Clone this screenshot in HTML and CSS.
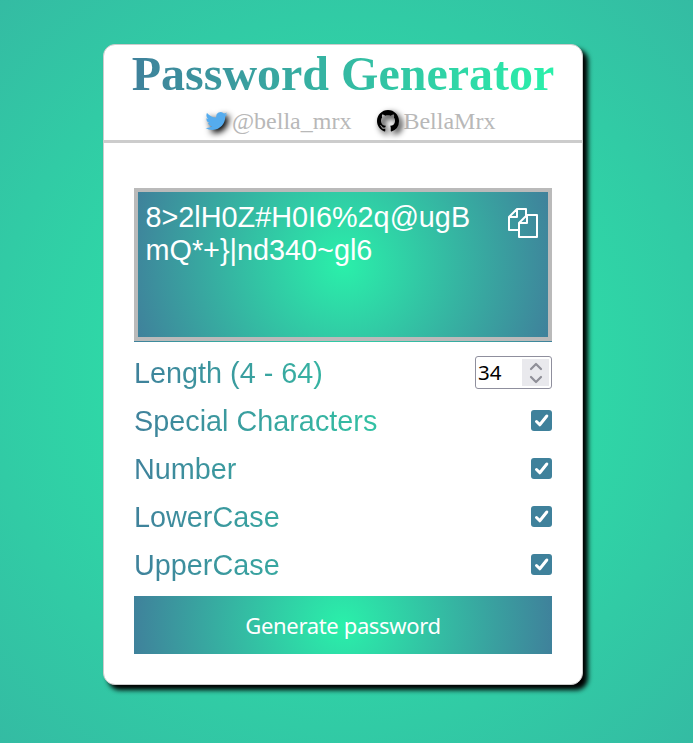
FILE: index.html
```html
<!DOCTYPE html>
<html lang="en">
<head>
<meta charset="utf-8">
<title>Password Generator</title>
<link rel="stylesheet" href="styles.css">
</head>
<body>
<main class="card">
  <header class="header">
    <h1 class="title"><span class="title-text">Password Generator</span></h1>
    <nav class="links">
      <a class="link"><svg class="icon twitter" viewBox="0 0 24 24"><path fill="#55acee" d="M23.953 4.57a10 10 0 01-2.825.775 4.958 4.958 0 002.163-2.723c-.951.555-2.005.959-3.127 1.184a4.92 4.92 0 00-8.384 4.482C7.69 8.095 4.067 6.13 1.64 3.162a4.822 4.822 0 00-.666 2.475c0 1.71.87 3.213 2.188 4.096a4.904 4.904 0 01-2.228-.616v.06a4.923 4.923 0 003.946 4.827 4.996 4.996 0 01-2.212.085 4.936 4.936 0 004.604 3.417 9.867 9.867 0 01-6.102 2.105c-.39 0-.779-.023-1.17-.067a13.995 13.995 0 007.557 2.209c9.053 0 13.998-7.496 13.998-13.985 0-.21 0-.42-.015-.63A9.935 9.935 0 0024 4.59z"/></svg><span class="twitter-name">@bella_mrx</span></a>
      <a class="link"><svg class="icon github" viewBox="0 0 16 16"><path d="M8 0C3.58 0 0 3.58 0 8c0 3.54 2.29 6.53 5.47 7.59.4.07.55-.17.55-.38 0-.19-.01-.82-.01-1.49-2.01.37-2.53-.49-2.69-.94-.09-.23-.48-.94-.82-1.13-.28-.15-.68-.52-.01-.53.63-.01 1.08.58 1.23.82.72 1.21 1.87.87 2.33.66.07-.52.28-.87.51-1.07-1.78-.2-3.64-.89-3.64-3.95 0-.87.31-1.59.82-2.15-.08-.2-.36-1.02.08-2.12 0 0 .67-.21 2.2.82.64-.18 1.32-.27 2-.27s1.36.09 2 .27c1.53-1.04 2.2-.82 2.2-.82.44 1.1.16 1.92.08 2.12.51.56.82 1.27.82 2.15 0 3.07-1.87 3.75-3.65 3.95.29.25.54.73.54 1.48 0 1.07-.01 1.93-.01 2.2 0 .21.15.46.55.38A8.01 8.01 0 0016 8c0-4.42-3.58-8-8-8z"/></svg><span class="github-name">BellaMrx</span></a>
    </nav>
  </header>
  <section class="content">
    <div class="result">
      <div class="password"><span>8&gt;2lH0Z#H0I6%2q@ugB<br>mQ*+}|nd340~gl6</span>
        <svg class="copy" viewBox="0 0 30 30" fill="none" stroke="#fff" stroke-width="2" stroke-linejoin="round"><path d="M11 22H1V9l8-8h9v7M1 9h8V1M19 7h10v22H11V15l8-8v8h-8"/></svg>
      </div>
    </div>
    <div class="options">
      <div class="row"><span class="label">Length (4 - 64)</span><div class="number"><span>34</span><span class="spin"><svg viewBox="0 0 27 27" fill="none" stroke="#8f8f98" stroke-width="2.2" stroke-linecap="round" stroke-linejoin="round"><path d="M9 10l5-5 5 5M9 18l5 5 5-5"/></svg></span></div></div>
      <div class="row"><span class="label">Special Characters</span><svg class="check" viewBox="0 0 21 21"><path d="M5.5 11.5l3.3 3.3 7-8.8"/></svg></div>
      <div class="row"><span class="label">Number</span><svg class="check" viewBox="0 0 21 21"><path d="M5.5 11.5l3.3 3.3 7-8.8"/></svg></div>
      <div class="row"><span class="label">LowerCase</span><svg class="check" viewBox="0 0 21 21"><path d="M5.5 11.5l3.3 3.3 7-8.8"/></svg></div>
      <div class="row"><span class="label">UpperCase</span><svg class="check" viewBox="0 0 21 21"><path d="M5.5 11.5l3.3 3.3 7-8.8"/></svg></div>
    </div>
    <button class="generate" type="button">Generate password</button>
  </section>
</main>
</body>
</html>
```
FILE: styles.css
```css
* { box-sizing: border-box; }
html { height: 100%; }
body {
  margin: 0;
  height: 743px;
  padding: 44px 110px 0 103px;
  overflow: hidden;
  background: radial-gradient(circle 1071px at center, #2af0aa, #3f819b);
}
.card {
  width: 480px;
  height: 641px;
  background: #fff;
  border: 1px solid #ccc;
  border-radius: 12px;
  box-shadow: 5px 5px 5px #000;
}
.header {
  height: 98px;
  border-bottom: 3px solid #ccc;
  font-family: "Liberation Serif", serif;
}
.title {
  margin: 0;
  height: 58px;
  font-size: 48px;
  line-height: 58px;
  text-align: center;
  white-space: nowrap;
}
.title-text {
  display: inline-block;
  background: linear-gradient(to right, #3f819b, #2af0aa);
  -webkit-background-clip: text;
  background-clip: text;
  color: transparent;
}
.links {
  display: flex;
  padding-left: 101px;
  gap: 26px;
  height: 37px;
  align-items: center;
  color: #b8b8b8;
  font-size: 24px;
  line-height: 37px;
}
.link { display: flex; align-items: center; gap: 4px; }
.icon { width: 22px; height: 22px; margin-top: -2px; filter: drop-shadow(3px 3px 3px #000); }
.twitter { width: 23px; }
.content { padding: 45px 30px 0; font-family: "Liberation Sans", sans-serif; }
.result {
  height: 154px;
  padding-bottom: 1px;
  background: linear-gradient(to right, #3f819b, #2af0aa);
  background: radial-gradient(circle, #2af0aa, #3f819b);
}
.password {
  display: flex;
  justify-content: space-between;
  height: 153px;
  padding: 9px 10px 0 7.5px;
  border: 4px solid #bababa;
  background: radial-gradient(circle, #2af0aa, #3f819b);
  color: #fff;
  font-size: 28.8px;
  line-height: 33px;
}
.copy { width: 30px; height: 30px; margin-top: 7px; }
.options { padding: 7px 0; }
.row { display: flex; align-items: center; justify-content: space-between; height: 48px; }
.label {
  flex: 1;
  font-size: 28.8px;
  line-height: 36px;
  background: linear-gradient(to right, #3f819b, #2af0aa 418px);
  -webkit-background-clip: text;
  background-clip: text;
  color: transparent;
}
.number {
  display: flex;
  align-items: center;
  justify-content: space-between;
  width: 77px;
  height: 33px;
  margin-bottom: 2px;
  padding: 0 2px;
  border: 1px solid #8f8f9d;
  border-radius: 3px;
  background: #fff;
  color: #000;
  font: 20.5px "Noto Sans", sans-serif;
}
.spin { width: 27px; height: 27px; background: #e9e9ed; }
.spin svg { display: block; }
.check { width: 21px; height: 21px; margin-bottom: 2px; border-radius: 3px; background: #3f819b; }
.check path { fill: none; stroke: #fff; stroke-width: 3; stroke-linecap: round; stroke-linejoin: round; }
.generate {
  display: block;
  width: 100%;
  height: 58px;
  padding: 0;
  border: 0;
  background: radial-gradient(circle, #2af0aa, #3f819b);
  color: #fff;
  font: 22px "Noto Sans", sans-serif;
  letter-spacing: -0.35px;
}
```
